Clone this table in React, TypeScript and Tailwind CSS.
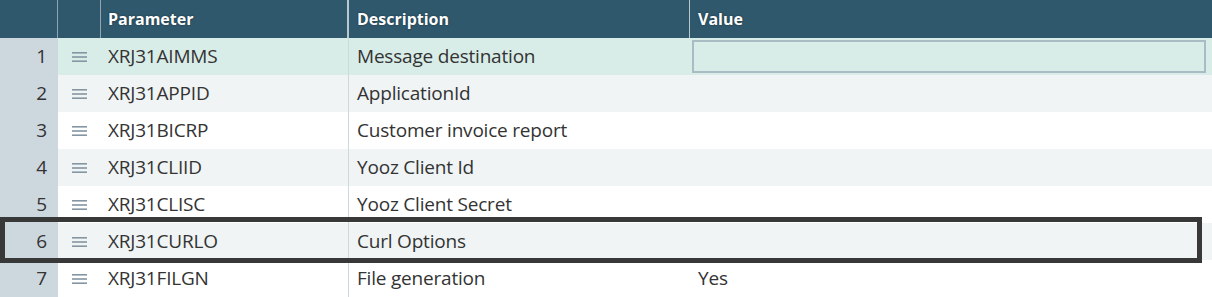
import React from "react";

const rows = [
  { n: 1, p: "XRJ31AIMMS", d: "Message destination", v: "", input: true },
  { n: 2, p: "XRJ31APPID", d: "ApplicationId", v: "" },
  { n: 3, p: "XRJ31BICRP", d: "Customer invoice report", v: "" },
  { n: 4, p: "XRJ31CLIID", d: "Yooz Client Id", v: "" },
  { n: 5, p: "XRJ31CLISC", d: "Yooz Client Secret", v: "" },
  { n: 6, p: "XRJ31CURLO", d: "Curl Options", v: "" },
  { n: 7, p: "XRJ31FILGN", d: "File generation", v: "Yes" },
];

function Handle() {
  return (
    <svg width="15" height="12" viewBox="0 0 15 12">
      <rect x="0" y="1" width="15" height="1.6" fill="#8596a3" />
      <rect x="0" y="5.2" width="15" height="1.6" fill="#8596a3" />
      <rect x="0" y="9.4" width="15" height="1.6" fill="#8596a3" />
    </svg>
  );
}

export default function App() {
  const bgFor = (n: number) =>
    n === 1 ? "bg-[#d9ede8]" : n % 2 === 0 ? "bg-[#f0f4f5]" : "bg-white";
  return (
    <div
      className="relative w-[1212px] h-[297px] overflow-hidden bg-white text-[#333333]"
      style={{ fontFamily: '"Open Sans", "Liberation Sans", sans-serif' }}
    >
      <div className="grid grid-cols-[58px_43px_248px_341px_1fr] h-[38px] bg-[#2f586c] text-white text-[16px] font-bold">
        <div className="border-r border-[#8fa6b2]" />
        <div className="border-r border-[#8fa6b2]" />
        <div className="border-r-2 border-[#b9c8cf] flex items-center pl-[7px] [text-shadow:0_0_2px_rgba(0,0,0,0.5)]">Parameter</div>
        <div className="border-r border-[#b9c8cf] flex items-center pl-[8px] [text-shadow:0_0_2px_rgba(0,0,0,0.5)]">Description</div>
        <div className="flex items-center pl-[8px] [text-shadow:0_0_2px_rgba(0,0,0,0.5)]">Value</div>
      </div>
      {rows.map((r) => (
        <div
          key={r.n}
          className={`grid grid-cols-[58px_43px_248px_341px_1fr] h-[37px] text-[19px] tracking-[-0.2px] ${bgFor(r.n)}`}
        >
          <div className="bg-[#cdd7de] flex items-center justify-end pr-[11px]">{r.n}</div>
          <div className="flex items-center pl-[14px]">
            <Handle />
          </div>
          <div className="flex items-center pl-[7px] border-r border-[#cfd8dc]">{r.p}</div>
          <div className="flex items-center pl-[8px]">{r.d}</div>
          <div className="flex items-center pl-[8px]">
            {r.input ? (
              <div className="-ml-[6px] h-[33px] w-full border-2 border-[#a9bcc4] bg-[#d9ede8]" />
            ) : (
              r.v
            )}
          </div>
        </div>
      ))}
      <div className="absolute left-0 top-[217px] w-[1202px] h-[46px] border-[5px] border-[#383838]" />
    </div>
  );
}
